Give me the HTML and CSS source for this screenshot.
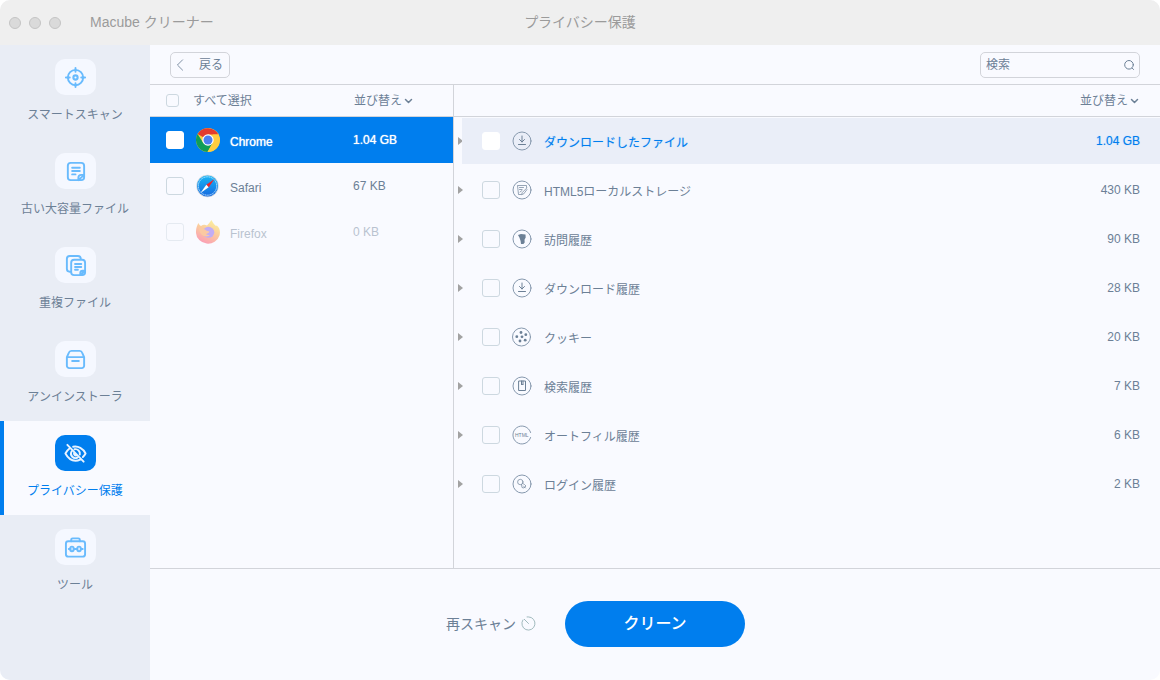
FILE: index.html
```html
<!DOCTYPE html>
<html lang="ja">
<head>
<meta charset="utf-8">
<title>Macube クリーナー</title>
<link rel="stylesheet" href="styles.css">
</head>
<body>
<svg class="sprite" aria-hidden="true">
  <symbol id="download" viewBox="0 0 20 20"><circle class="ring" cx="10" cy="10" r="9"/><path d="M10 5v6M7.500 8.500 10 11l2.500-2.500M6.500 13.500h7"/></symbol>
  <symbol id="chevron" viewBox="0 0 8 6"><path d="M1 1.500 4 4.500 7 1.500"/></symbol>
</svg>
<div class="window">
  <header class="titlebar">
    <div class="lights"><i></i><i></i><i></i></div>
    <span class="app-name">Macube クリーナー</span>
    <h1 class="title">プライバシー保護</h1>
  </header>
  <div class="body">
    <nav class="sidebar">
      <a class="nav-item" href="#scan">
        <span class="nav-icon"><svg viewBox="0 0 24 24"><circle cx="12" cy="12" r="8"/><circle cx="12" cy="12" r="2.200" stroke-width="2.200"/><path d="M12 2v4M12 18v4M2 12h4M18 12h4"/></svg></span>
        <span>スマートスキャン</span>
      </a>
      <a class="nav-item" href="#large">
        <span class="nav-icon"><svg viewBox="0 0 24 24"><path d="M15 21H7a3 3 0 0 1-3-3V6a3 3 0 0 1 3-3h11a3 3 0 0 1 3 3v9.500L15 21v-2.500a3 3 0 0 1 3-3h3V18a3 3 0 0 1-3 3zM8.500 8h8M8.500 11.500h8M8.500 15h3.500"/></svg></span>
        <span>古い大容量ファイル</span>
      </a>
      <a class="nav-item" href="#duplicate">
        <span class="nav-icon"><svg viewBox="0 0 24 24"><path d="M6 18.500a3 3 0 0 1-3-3V5a3 3 0 0 1 3-3h8.500a3 3 0 0 1 3 3M17 22h-6.500a3 3 0 0 1-3-3V9a3 3 0 0 1 3-3H19a3 3 0 0 1 3 3v8.500L17 22v-2a2.500 2.500 0 0 1 2.500-2.500H22V19a3 3 0 0 1-3 3zM11.500 10.500h6.500M11.500 13.500h6.500M11.500 16.500h3"/></svg></span>
        <span>重複ファイル</span>
      </a>
      <a class="nav-item" href="#uninstall">
        <span class="nav-icon"><svg viewBox="0 0 24 24"><path d="M3 9.500v9a2.500 2.500 0 0 0 2.500 2.500h13a2.500 2.500 0 0 0 2.500-2.500v-9l-2-4.500a3 3 0 0 0-3-2H8a3 3 0 0 0-3 2zM3 9.500h18M8.500 13.500h7"/></svg></span>
        <span>アンインストーラ</span>
      </a>
      <a class="nav-item active" href="#privacy" aria-current="page">
        <span class="nav-icon"><svg viewBox="0 0 24 24"><path d="M6 6.500C4.300 7.800 2.600 9.700 1.500 12c2.300 4.300 6.200 7.500 10.500 7.500 1.700 0 3.300-.4 4.800-1.200M9.500 5C14.800 3.800 20 7 22.500 12c-.8 1.500-1.700 2.700-2.800 3.700M7.800 10a4.600 4.600 0 0 0 6.200 6.200M11 7.600a4.600 4.600 0 0 1 5.500 5.400M10.500 11.500a2 2 0 0 0 2.500 2.500M3.500 3l17 17.500"/></svg></span>
        <span>プライバシー保護</span>
      </a>
      <a class="nav-item" href="#tools">
        <span class="nav-icon"><svg viewBox="0 0 24 24"><rect x="2" y="5.500" width="20" height="16" rx="2.500"/><path d="M7.500 5.500V4A1.500 1.500 0 0 1 9 2.500h6A1.500 1.500 0 0 1 16.500 4v1.500M5 13.500h2M10 13.500h4M17.500 13.500h2"/><ellipse cx="8.300" cy="13.500" rx="1.900" ry="2.400"/><ellipse cx="15.700" cy="13.500" rx="1.900" ry="2.400"/></svg></span>
        <span>ツール</span>
      </a>
    </nav>
    <main class="main">
      <div class="toolbar">
        <button class="back" type="button"><svg viewBox="0 0 8 14"><path d="M7 1 1 7l6 6"/></svg>戻る</button>
        <div class="search">
          <input type="search" placeholder="検索" aria-label="検索">
          <svg viewBox="0 0 12 12"><circle cx="6" cy="5.800" r="4.300"/><path d="m9.300 9.200 1.200 1.300"/></svg>
        </div>
      </div>
      <div class="panels">
        <section class="browsers">
          <div class="head">
            <label class="select-all"><input class="check small" type="checkbox">すべて選択</label>
            <button class="sort" type="button">並び替え<svg><use href="#chevron"/></svg></button>
          </div>
          <ul class="list">
            <li class="browser selected">
              <input class="check" type="checkbox" id="chrome">
              <svg class="logo" viewBox="0 0 24 24">
                <circle cx="12" cy="12" r="12" fill="#ffcd40"/>
                <path d="M12 12 1.600 6A12 12 0 0 1 22.400 6.500H12z" fill="#e33b2e"/>
                <path d="M1.600 6A12 12 0 0 0 11.500 24L16.700 14.700 12 12 7 14.500z" fill="#0f9d58"/>
                <path d="M11.500 24 16.800 14.700 12 12l5-5.500h5.400A12 12 0 0 1 11.500 24z" fill="#ffcd40"/>
                <circle cx="12" cy="12" r="5.700" fill="#fff"/><circle cx="12" cy="12" r="4.500" fill="#4b7ff0"/>
              </svg>
              <label class="name" for="chrome">Chrome</label><span class="size">1.04 GB</span>
            </li>
            <li class="browser">
              <input class="check" type="checkbox" id="safari">
              <svg class="logo" viewBox="0 0 24 24">
                <defs><linearGradient id="sea" x2="0" y2="1"><stop stop-color="#18b7f6"/><stop offset="1" stop-color="#1769e0"/></linearGradient></defs>
                <circle cx="11.500" cy="12" r="11.200" fill="#d3d8df"/><circle cx="11.500" cy="12" r="10.500" fill="url(#sea)"/>
                <circle cx="11.500" cy="12" r="9.200" fill="none" stroke="#bfe5ff" stroke-width="1" stroke-dasharray=".5 1.300"/>
                <path d="M18.500 5 10.300 10.800l2.400 2.400z" fill="#f0252b"/><path d="M4.500 19 10.300 10.800l2.400 2.400z" fill="#fff"/>
              </svg>
              <label class="name" for="safari">Safari</label><span class="size">67 KB</span>
            </li>
            <li class="browser empty">
              <input class="check" type="checkbox" id="firefox" disabled>
              <svg class="logo" viewBox="0 0 24 24">
                <defs><linearGradient id="fire" x1=".8" y1="0" x2=".3" y2="1"><stop stop-color="#fff12e"/><stop offset=".45" stop-color="#ff9a28"/><stop offset="1" stop-color="#ff2d60"/></linearGradient></defs>
                <path d="M2.500 3C3 4.500 4 5.500 5 6 7 4.500 9 4.500 11 5.500 12.500 4 14 2 15.500 0c1 2 2 4 4.500 6l.8-.5C24 8 24.500 12 23.500 15.500A12 11.300 0 0 1 0 13C-.2 9 .8 6 2.500 3z" fill="url(#fire)"/>
                <ellipse cx="12.500" cy="12.300" rx="5.800" ry="5.500" fill="#8052e8"/>
                <path d="M3 8.500c3-.5 6 .5 7.500 2.300l3 .7c-.8 2-2.500 1.800-3.500 2.800 1 1 3 .8 4 .5-3 3.500-10.500 1.200-11-6.300z" fill="#ff8f32"/>
              </svg>
              <label class="name" for="firefox">Firefox</label><span class="size">0 KB</span>
            </li>
          </ul>
        </section>
        <section class="details">
          <div class="head">
            <button class="sort" type="button">並び替え<svg><use href="#chevron"/></svg></button>
          </div>
          <ul class="list">
            <li class="item selected"><button class="expand" type="button" aria-label="展開"></button><div class="row"><input class="check" type="checkbox" id="c1"><svg class="kind"><use href="#download"/></svg><label class="name" for="c1">ダウンロードしたファイル</label><span class="size">1.04 GB</span></div></li>
            <li class="item"><button class="expand" type="button" aria-label="展開"></button><div class="row"><input class="check" type="checkbox" id="c2"><svg class="kind" viewBox="0 0 20 20"><circle class="ring" cx="10" cy="10" r="9"/><path class="thin" d="M9 14.500H6.500L5.500 5.500h9v2M7.500 7.500h4M7.500 9.500h2.500M14.800 8 10.300 12.500 9.500 14.700l2.200-.8L15 9.500M10 10.500l-2 1.500"/></svg><label class="name" for="c2">HTML5ローカルストレージ</label><span class="size">430 KB</span></div></li>
            <li class="item"><button class="expand" type="button" aria-label="展開"></button><div class="row"><input class="check" type="checkbox" id="c3"><svg class="kind" viewBox="0 0 20 20"><circle class="ring" cx="10" cy="10" r="9"/><path class="solid" d="M6 6 9 5l4.500.5.200 3-1.200 2.200.2 2.800-1.300 1.500H9L8.600 12 7.500 8.800z"/></svg><label class="name" for="c3">訪問履歴</label><span class="size">90 KB</span></div></li>
            <li class="item"><button class="expand" type="button" aria-label="展開"></button><div class="row"><input class="check" type="checkbox" id="c4"><svg class="kind"><use href="#download"/></svg><label class="name" for="c4">ダウンロード履歴</label><span class="size">28 KB</span></div></li>
            <li class="item"><button class="expand" type="button" aria-label="展開"></button><div class="row"><input class="check" type="checkbox" id="c5"><svg class="kind" viewBox="0 0 20 20"><circle class="ring" cx="9.500" cy="10" r="9"/><g class="solid"><circle cx="9" cy="5.500" r="1.400"/><circle cx="13.800" cy="7.700" r="1.400"/><circle cx="4.800" cy="9.700" r="1.400"/><circle cx="10" cy="9.800" r="1.400"/><circle cx="8" cy="14" r="1.400"/><circle cx="13.200" cy="13.200" r="1.400"/></g></svg><label class="name" for="c5">クッキー</label><span class="size">20 KB</span></div></li>
            <li class="item"><button class="expand" type="button" aria-label="展開"></button><div class="row"><input class="check" type="checkbox" id="c6"><svg class="kind" viewBox="0 0 20 20"><circle class="ring" cx="10" cy="10" r="9"/><path d="M7 5h6.500v9.500H7zM9.500 5v4l.8-1 .7 1V5"/></svg><label class="name" for="c6">検索履歴</label><span class="size">7 KB</span></div></li>
            <li class="item"><button class="expand" type="button" aria-label="展開"></button><div class="row"><input class="check" type="checkbox" id="c7"><svg class="kind" viewBox="0 0 20 20"><path class="ring" d="M18.600 7.500a9 9 0 1 0 0 5"/><text x="3" y="12">HTML</text></svg><label class="name" for="c7">オートフィル履歴</label><span class="size">6 KB</span></div></li>
            <li class="item"><button class="expand" type="button" aria-label="展開"></button><div class="row"><input class="check" type="checkbox" id="c8"><svg class="kind" viewBox="0 0 20 20"><circle class="ring" cx="10" cy="10" r="9"/><circle class="thin" cx="8.300" cy="8" r="2.700"/><path class="thin" d="m9.500 10.500.5 3 2 .5 2-2-1.500-1.500-1.700-1M11.500 12l2 2"/></svg><label class="name" for="c8">ログイン履歴</label><span class="size">2 KB</span></div></li>
          </ul>
        </section>
      </div>
      <footer class="footer">
        <button class="rescan" type="button">再スキャン<svg viewBox="0 0 16 16"><path d="M2 4.200A7 7 0 1 0 8 1H6.500M3.500 3.500 8 8"/></svg></button>
        <button class="clean" type="button">クリーン</button>
      </footer>
    </main>
  </div>
</div>
</body>
</html>
```
FILE: styles.css
```css
* { box-sizing: border-box; }

body {
  margin: 0;
  background: #fff;
  color: #6c8096;
  font: 12px/18px "Liberation Sans", "Noto Sans CJK JP", sans-serif;
}

button {
  padding: 0;
  border: 0;
  background: none;
  color: inherit;
  font: inherit;
}

svg {
  flex: none;
  fill: none;
  stroke: currentColor;
  stroke-linecap: round;
  stroke-linejoin: round;
}

.sprite { position: absolute; width: 0; height: 0; }

.window {
  display: flex;
  flex-direction: column;
  min-height: 100vh;
  overflow: hidden;
  border-radius: 10px;
  background: #f9faff;
}

.titlebar {
  display: grid;
  grid-template-columns: 1fr auto 1fr;
  align-items: center;
  height: 45px;
  padding-bottom: 2px;
  background: #efefef;
  color: #9b9b9b;
  font-size: 14px;
}

.lights {
  display: flex;
  grid-area: 1 / 1;
  gap: 8px;
  padding: 3px 0 0 9px;
}

.lights i {
  width: 12px;
  height: 12px;
  border: 1px solid #c4c4c4;
  border-radius: 50%;
  background: #dadada;
}

.app-name {
  grid-area: 1 / 1;
  padding-left: 90px;
}

.title {
  grid-column: 2;
  margin: 0;
  font-size: 14px;
  font-weight: 400;
}

.body { display: flex; flex: 1; }

.sidebar {
  flex: none;
  width: 150px;
  background: #e9edf5;
}

.nav-item {
  display: flex;
  flex-direction: column;
  align-items: center;
  gap: 11px;
  height: 94px;
  padding-top: 14px;
  color: inherit;
  text-decoration: none;
}

.nav-icon {
  display: flex;
  align-items: center;
  justify-content: center;
  width: 41px;
  height: 36px;
  border-radius: 10px;
  background: #f5f8ff;
  color: #69bbfd;
}

.nav-icon svg {
  width: 23px;
  height: 23px;
  stroke-width: 2;
}

.active {
  background: #f9faff;
  box-shadow: inset 4px 0 #007eee;
  color: #007eee;
}

.active .nav-icon { background: #007eee; color: #e8f3ff; }

.main {
  display: flex;
  flex: 1;
  flex-direction: column;
  min-width: 0;
}

.toolbar {
  display: flex;
  align-items: center;
  justify-content: space-between;
  height: 40px;
  padding: 0 20px;
  border-bottom: 1px solid #d2d4da;
}

.back {
  display: flex;
  align-items: center;
  gap: 15px;
  width: 60px;
  height: 26px;
  padding-left: 5px;
  border: 1px solid #d2d4da;
  border-radius: 5px;
}

.back svg { width: 8px; height: 12px; }

.search {
  display: flex;
  align-items: center;
  width: 160px;
  height: 26px;
  padding: 0 4px 0 5px;
  border: 1px solid #d2d4da;
  border-radius: 5px;
}

.search input {
  flex: 1;
  min-width: 0;
  padding: 0;
  border: 0;
  outline: 0;
  background: none;
  color: inherit;
  font: inherit;
}

.search input::placeholder { color: inherit; }
.search svg { width: 12px; height: 12px; }

.panels { display: flex; flex: 1; }

.browsers {
  flex: none;
  width: 304px;
  border-right: 1px solid #d2d4da;
}

.details { flex: 1; min-width: 0; }

.head {
  display: flex;
  align-items: center;
  height: 32px;
  border-bottom: 1px solid #d2d4da;
}

.select-all {
  display: flex;
  align-items: center;
  gap: 14px;
  width: 204px;
  padding-left: 16px;
}

.sort { display: flex; align-items: center; gap: 2px; }
.sort svg { width: 9px; height: 6px; stroke-width: 1.5; }
.details .sort { margin: 0 21px 0 auto; }

.check {
  flex: none;
  width: 18px;
  height: 18px;
  margin: 0;
  appearance: none;
  border: 1px solid #cdd8e0;
  border-radius: 3px;
}

.small { width: 13px; height: 13px; }
.selected .check { border-color: #fff; background: #fff; }

.list { margin: 0; padding: 0; list-style: none; }

.browser {
  display: flex;
  align-items: center;
  height: 46px;
  padding: 0 16px;
}

.logo { width: 24px; height: 24px; margin: 0 10px 0 12px; stroke: none; }
.name { padding-top: 3px; }
.browser .name { width: 123px; }
.size { white-space: nowrap; }
.browser.selected { background: #007eee; color: #fff; text-shadow: 0 0 1px #fff; }
.empty > * { opacity: 0.45; }

.item { display: flex; height: 46px; margin: 1px 0 3px; }

.expand {
  display: flex;
  align-items: center;
  width: 8px;
  padding-left: 4px;
}

.expand::before {
  content: "";
  border-left: 5px solid #a2a2a2;
  border-top: 4px solid transparent;
  border-bottom: 4px solid transparent;
}

.row {
  display: flex;
  flex: 1;
  align-items: center;
  padding: 0 20px;
}

.kind { width: 20px; height: 20px; margin: 0 12px; }
.kind text { fill: currentColor; stroke: none; font-size: 5px; }
.ring { stroke: #8799ae; }
.thin { stroke-width: 0.7; }
.solid { fill: currentColor; stroke: none; }
.row .size { margin-left: auto; }
.item.selected .row { background: #eaeef8; }
.item.selected .name,
.item.selected .size { color: #007eee; text-shadow: 0 0 1px #8bc4fa; }
.item.selected .size { padding-right: 0; }

.footer {
  display: flex;
  align-items: center;
  justify-content: center;
  gap: 29px;
  height: 112px;
  padding: 0 119px 2px 0;
  border-top: 1px solid #d2d4da;
}

.rescan { display: flex; align-items: center; gap: 5px; font-size: 14px; }
.rescan svg { width: 15px; height: 15px; color: #9bb5b9; }

.clean {
  width: 180px;
  height: 46px;
  border-radius: 23px;
  background: #007eee;
  color: #fff;
  font-size: 16px;
  font-weight: 500;
}
```
